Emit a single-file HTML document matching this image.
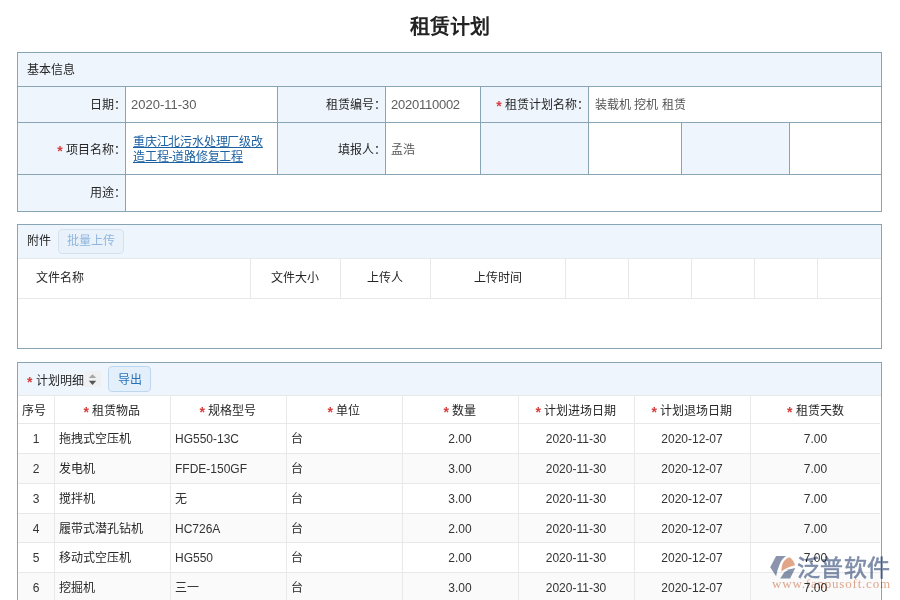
<!DOCTYPE html>
<html lang="zh-CN">
<head>
<meta charset="utf-8">
<style>
*{margin:0;padding:0;box-sizing:border-box}
html,body{width:900px;height:600px;overflow:hidden;background:#fff}
body{position:relative;font-family:"Liberation Sans",sans-serif;font-size:12px;color:#262626}
.a{position:absolute}
.hl{position:absolute;height:1px}
.vl{position:absolute;width:1px}
.bd{background:#89a4b4}
.lg{background:#e6e8ea}
.bg{background:#eef5fd}
.t{position:absolute;white-space:nowrap;line-height:16px}
.r{color:#d83c3c;font-size:14px;font-weight:bold;position:relative;top:2px;line-height:0}
.num{font-size:13px;color:#5c5c5c}
.v{color:#555}
.tn{font-size:12px;color:#333}
</style>
</head>
<body>
<!-- title -->
<div class="t" style="left:0;width:900px;top:15px;text-align:center;font-size:20px;font-weight:bold;color:#222;line-height:24px">租赁计划</div>

<!-- ===== Box 1 ===== -->
<div class="a" style="left:17px;top:52px;width:865px;height:160px;border:1px solid #89a4b4;background:#fff"></div>
<div class="a bg" style="left:18px;top:53px;width:863px;height:33px"></div>
<div class="hl bd" style="left:17px;top:86px;width:865px"></div>
<div class="hl bd" style="left:17px;top:122px;width:865px"></div>
<div class="hl bd" style="left:17px;top:174px;width:865px"></div>
<!-- label bg cells -->
<div class="a bg" style="left:18px;top:87px;width:107px;height:35px"></div>
<div class="a bg" style="left:278px;top:87px;width:107px;height:35px"></div>
<div class="a bg" style="left:481px;top:87px;width:107px;height:35px"></div>
<div class="a bg" style="left:18px;top:123px;width:107px;height:51px"></div>
<div class="a bg" style="left:278px;top:123px;width:107px;height:51px"></div>
<div class="a bg" style="left:481px;top:123px;width:107px;height:51px"></div>
<div class="a bg" style="left:682px;top:123px;width:107px;height:51px"></div>
<div class="a bg" style="left:18px;top:175px;width:107px;height:36px"></div>
<!-- vertical lines -->
<div class="vl bd" style="left:125px;top:86px;height:125px"></div>
<div class="vl bd" style="left:277px;top:86px;height:88px"></div>
<div class="vl bd" style="left:385px;top:86px;height:88px"></div>
<div class="vl bd" style="left:480px;top:86px;height:88px"></div>
<div class="vl bd" style="left:588px;top:86px;height:88px"></div>
<div class="vl bd" style="left:681px;top:122px;height:52px"></div>
<div class="vl bd" style="left:789px;top:122px;height:52px"></div>

<div class="t" style="left:27px;top:62px">基本信息</div>
<div class="t" style="right:774px;top:97px">日期：</div>
<div class="t num" style="left:131px;top:97px">2020-11-30</div>
<div class="t" style="right:514px;top:97px">租赁编号：</div>
<div class="t num" style="left:391px;top:97px;letter-spacing:-0.25px">2020110002</div>
<div class="t" style="right:311px;top:97px"><span class="r">*</span> 租赁计划名称：</div>
<div class="t v" style="left:595px;top:97px">装载机 挖机 租赁</div>
<div class="t" style="right:774px;top:142px"><span class="r">*</span> 项目名称：</div>
<div class="a" style="left:133px;top:135px;width:140px;line-height:15px;letter-spacing:-0.2px;color:#1c61a2;text-decoration:underline">重庆江北污水处理厂级改造工程-道路修复工程</div>
<div class="t" style="right:514px;top:142px">填报人：</div>
<div class="t v" style="left:391px;top:142px">孟浩</div>
<div class="t" style="right:774px;top:185px">用途：</div>

<!-- ===== Box 2 ===== -->
<div class="a" style="left:17px;top:224px;width:865px;height:125px;border:1px solid #89a4b4;background:#fff"></div>
<div class="a bg" style="left:18px;top:225px;width:863px;height:33px"></div>
<div class="hl lg" style="left:18px;top:258px;width:863px"></div>
<div class="hl lg" style="left:18px;top:298px;width:863px"></div>
<div class="vl lg" style="left:250px;top:258px;height:40px"></div>
<div class="vl lg" style="left:340px;top:258px;height:40px"></div>
<div class="vl lg" style="left:430px;top:258px;height:40px"></div>
<div class="vl lg" style="left:565px;top:258px;height:40px"></div>
<div class="vl lg" style="left:628px;top:258px;height:40px"></div>
<div class="vl lg" style="left:691px;top:258px;height:40px"></div>
<div class="vl lg" style="left:754px;top:258px;height:40px"></div>
<div class="vl lg" style="left:817px;top:258px;height:40px"></div>
<div class="t" style="left:27px;top:233px">附件</div>
<div class="a" style="left:58px;top:229px;width:66px;height:25px;border:1px solid #d5e2ee;border-radius:4px;background:#e9f2fb;color:#8fb6de;text-align:center;line-height:23px">批量上传</div>
<div class="t" style="left:36px;top:270px">文件名称</div>
<div class="t" style="left:250px;width:90px;text-align:center;top:270px">文件大小</div>
<div class="t" style="left:340px;width:90px;text-align:center;top:270px">上传人</div>
<div class="t" style="left:430px;width:135px;text-align:center;top:270px">上传时间</div>

<!-- ===== Box 3 ===== -->
<div class="a" style="left:17px;top:362px;width:865px;height:260px;border:1px solid #89a4b4;background:#fff"></div>
<div class="a bg" style="left:18px;top:363px;width:863px;height:32px"></div>
<div class="hl lg" style="left:18px;top:395px;width:863px"></div>
<div class="t" style="left:27px;top:373px"><span class="r">*</span> 计划明细</div>
<div class="a" style="left:84px;top:371px;width:17px;height:16px;background:#eff0f2"></div><svg class="a" style="left:84px;top:371px" width="17" height="16" viewBox="0 0 17 16"><path d="M4.75 7 L8.5 3.2 L12.25 7 Z" fill="#a6a6a6"/><path d="M4.75 9.8 L12.25 9.8 L8.5 14 Z" fill="#555"/></svg>
<div class="a" style="left:108px;top:366px;width:43px;height:26px;border:1px solid #bfd7ee;border-radius:4px;background:#e3effb;color:#2a72b5;text-align:center;line-height:24px;padding-top:1px">导出</div>
<!-- table -->
<div class="a" style="left:18px;top:454px;width:862px;height:29px;background:#fafafa"></div>
<div class="a" style="left:18px;top:514px;width:862px;height:28px;background:#fafafa"></div>
<div class="a" style="left:18px;top:573px;width:862px;height:29px;background:#fafafa"></div>
<div class="hl lg" style="left:18px;top:423px;width:862px"></div>
<div class="hl lg" style="left:18px;top:453px;width:862px"></div>
<div class="hl lg" style="left:18px;top:483px;width:862px"></div>
<div class="hl lg" style="left:18px;top:513px;width:862px"></div>
<div class="hl lg" style="left:18px;top:542px;width:862px"></div>
<div class="hl lg" style="left:18px;top:572px;width:862px"></div>
<div class="vl lg" style="left:54px;top:395px;height:205px"></div>
<div class="vl lg" style="left:170px;top:395px;height:205px"></div>
<div class="vl lg" style="left:286px;top:395px;height:205px"></div>
<div class="vl lg" style="left:402px;top:395px;height:205px"></div>
<div class="vl lg" style="left:518px;top:395px;height:205px"></div>
<div class="vl lg" style="left:634px;top:395px;height:205px"></div>
<div class="vl lg" style="left:750px;top:395px;height:205px"></div>
<div class="t" style="left:22px;top:403px">序号</div>
<div class="t" style="left:54px;width:116px;text-align:center;top:403px"><span class="r">*</span> 租赁物品</div>
<div class="t" style="left:170px;width:116px;text-align:center;top:403px"><span class="r">*</span> 规格型号</div>
<div class="t" style="left:286px;width:116px;text-align:center;top:403px"><span class="r">*</span> 单位</div>
<div class="t" style="left:402px;width:116px;text-align:center;top:403px"><span class="r">*</span> 数量</div>
<div class="t" style="left:518px;width:116px;text-align:center;top:403px"><span class="r">*</span> 计划进场日期</div>
<div class="t" style="left:634px;width:116px;text-align:center;top:403px"><span class="r">*</span> 计划退场日期</div>
<div class="t" style="left:750px;width:131px;text-align:center;top:403px"><span class="r">*</span> 租赁天数</div>
<div class="t tn" style="left:18px;width:36px;text-align:center;top:431px">1</div>
<div class="t" style="left:59px;top:431px">拖拽式空压机</div>
<div class="t tn" style="left:175px;top:431px">HG550-13C</div>
<div class="t" style="left:291px;top:431px">台</div>
<div class="t tn" style="left:402px;width:116px;text-align:center;top:431px">2.00</div>
<div class="t tn" style="left:518px;width:116px;text-align:center;top:431px">2020-11-30</div>
<div class="t tn" style="left:634px;width:116px;text-align:center;top:431px">2020-12-07</div>
<div class="t tn" style="left:750px;width:131px;text-align:center;top:431px">7.00</div>
<div class="t tn" style="left:18px;width:36px;text-align:center;top:461px">2</div>
<div class="t" style="left:59px;top:461px">发电机</div>
<div class="t tn" style="left:175px;top:461px">FFDE-150GF</div>
<div class="t" style="left:291px;top:461px">台</div>
<div class="t tn" style="left:402px;width:116px;text-align:center;top:461px">3.00</div>
<div class="t tn" style="left:518px;width:116px;text-align:center;top:461px">2020-11-30</div>
<div class="t tn" style="left:634px;width:116px;text-align:center;top:461px">2020-12-07</div>
<div class="t tn" style="left:750px;width:131px;text-align:center;top:461px">7.00</div>
<div class="t tn" style="left:18px;width:36px;text-align:center;top:491px">3</div>
<div class="t" style="left:59px;top:491px">搅拌机</div>
<div class="t tn" style="left:175px;top:491px">无</div>
<div class="t" style="left:291px;top:491px">台</div>
<div class="t tn" style="left:402px;width:116px;text-align:center;top:491px">3.00</div>
<div class="t tn" style="left:518px;width:116px;text-align:center;top:491px">2020-11-30</div>
<div class="t tn" style="left:634px;width:116px;text-align:center;top:491px">2020-12-07</div>
<div class="t tn" style="left:750px;width:131px;text-align:center;top:491px">7.00</div>
<div class="t tn" style="left:18px;width:36px;text-align:center;top:521px">4</div>
<div class="t" style="left:59px;top:521px">履带式潜孔钻机</div>
<div class="t tn" style="left:175px;top:521px">HC726A</div>
<div class="t" style="left:291px;top:521px">台</div>
<div class="t tn" style="left:402px;width:116px;text-align:center;top:521px">2.00</div>
<div class="t tn" style="left:518px;width:116px;text-align:center;top:521px">2020-11-30</div>
<div class="t tn" style="left:634px;width:116px;text-align:center;top:521px">2020-12-07</div>
<div class="t tn" style="left:750px;width:131px;text-align:center;top:521px">7.00</div>
<div class="t tn" style="left:18px;width:36px;text-align:center;top:550px">5</div>
<div class="t" style="left:59px;top:550px">移动式空压机</div>
<div class="t tn" style="left:175px;top:550px">HG550</div>
<div class="t" style="left:291px;top:550px">台</div>
<div class="t tn" style="left:402px;width:116px;text-align:center;top:550px">2.00</div>
<div class="t tn" style="left:518px;width:116px;text-align:center;top:550px">2020-11-30</div>
<div class="t tn" style="left:634px;width:116px;text-align:center;top:550px">2020-12-07</div>
<div class="t tn" style="left:750px;width:131px;text-align:center;top:550px">7.00</div>
<div class="t tn" style="left:18px;width:36px;text-align:center;top:580px">6</div>
<div class="t" style="left:59px;top:580px">挖掘机</div>
<div class="t tn" style="left:175px;top:580px">三一</div>
<div class="t" style="left:291px;top:580px">台</div>
<div class="t tn" style="left:402px;width:116px;text-align:center;top:580px">3.00</div>
<div class="t tn" style="left:518px;width:116px;text-align:center;top:580px">2020-11-30</div>
<div class="t tn" style="left:634px;width:116px;text-align:center;top:580px">2020-12-07</div>
<div class="t tn" style="left:750px;width:131px;text-align:center;top:580px">7.00</div>
<!-- watermark -->
<svg class="a" style="left:765px;top:550px;mix-blend-mode:multiply" width="40" height="35" viewBox="0 0 40 35">
<path d="M11.1 6.1 L21 6.1 Q16 10 14.6 14.6 Q12.2 20 11.1 26.2 L5.2 17.2 Z" fill="#8a95ad"/>
<path d="M16.3 21.6 Q16.5 14 19.5 10.5 Q22 7.8 24.5 7.3 Q28.5 10 30 15.2 Q23 16.5 16.3 21.6 Z" fill="#e3a587"/>
<path d="M15.2 28.6 L19.5 22 Q24 18.8 30.3 18.1 L25.1 28.6 Z" fill="#8a95ad"/>
</svg>
<div class="t" style="left:797px;top:553px;font-size:23px;line-height:30px;font-weight:normal;color:#7f8daa;-webkit-text-stroke:0.6px #7f8daa;mix-blend-mode:multiply;letter-spacing:0.4px">泛普软件</div>
<div class="t" style="left:772px;top:577px;font-family:'Liberation Serif',serif;font-size:13px;line-height:14px;color:#e2ab90;mix-blend-mode:multiply;letter-spacing:0.8px">www.fanpusoft.com</div>
</body>
</html>
